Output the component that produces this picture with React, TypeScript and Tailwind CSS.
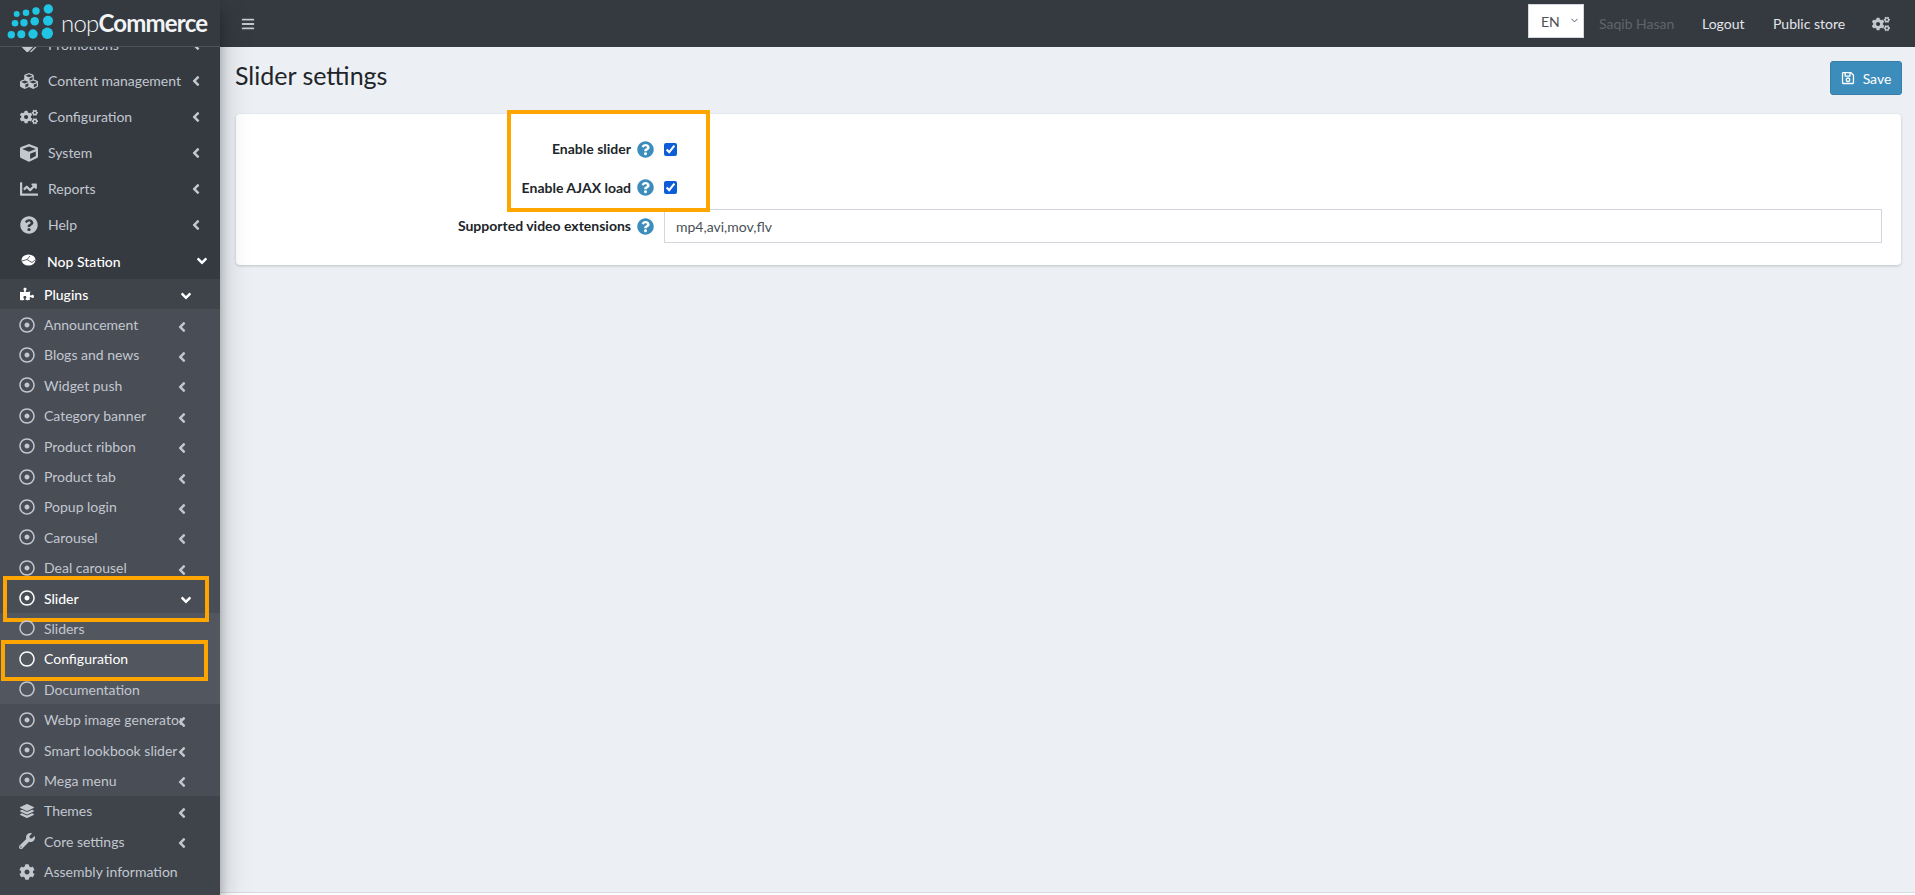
import React from "react";
import {
  FaAngleDown,
  FaAngleLeft,
  FaBars,
  FaChartLine,
  FaCog,
  FaCogs,
  FaCube,
  FaCubes,
  FaLayerGroup,
  FaPuzzlePiece,
  FaQuestionCircle,
  FaRegCircle,
  FaRegDotCircle,
  FaRegSave,
  FaTags,
  FaWrench,
} from "react-icons/fa";
import { ChevronDown } from "lucide-react";

const font = { fontFamily: 'Lato, "Noto Sans", sans-serif' };

const topItems = [
  { label: "Promotions", icon: FaTags },
  { label: "Content management", icon: FaCubes },
  { label: "Configuration", icon: FaCogs },
  { label: "System", icon: FaCube },
  { label: "Reports", icon: FaChartLine },
  { label: "Help", icon: FaQuestionCircle },
];

const pluginsBefore = [
  "Announcement",
  "Blogs and news",
  "Widget push",
  "Category banner",
  "Product ribbon",
  "Product tab",
  "Popup login",
  "Carousel",
  "Deal carousel",
];

const pluginsAfter = ["Webp image generator", "Smart lookbook slider", "Mega menu"];

const Logo = () => {
  const dots = [
    [16.7, 14, 3], [26, 12.7, 3.3], [36, 11, 3.7], [48.3, 9, 4.7],
    [15, 23.3, 3.3], [24, 22.7, 3.7], [34.7, 21.3, 4.3], [48, 20.7, 5],
    [11.3, 34.7, 3.7], [21.3, 34.3, 4], [33, 34, 4.7], [47.3, 33.3, 5.7],
  ];
  return (
    <svg width="56" height="46" viewBox="0 0 56 46" className="shrink-0">
      {dots.map(([cx, cy, r], i) => (
        <circle key={i} cx={cx} cy={cy} r={r} fill="#1fc5e2" />
      ))}
    </svg>
  );
};

const NopStationIcon = () => (
  <svg width="15" height="12" viewBox="0 0 15 12">
    <ellipse cx="7.5" cy="6" rx="7" ry="5.6" fill="#fff" />
    <path d="M1 7 L6 5.5 L9 2 M6 5.5 L11 8.5 L14 6" stroke="#353a41" strokeWidth="0.8" fill="none" />
  </svg>
);

const TopRow = ({ label, icon: Icon }: { label: string; icon: React.ComponentType<{ size?: number }> }) => (
  <div className="flex h-9 items-center text-[#c2c7d0] text-[14px]">
    <span className="flex w-[48px] justify-center pl-[10px]">
      <Icon size={18} />
    </span>
    <span className="-mt-[1px] w-[140px] whitespace-nowrap">{label}</span>
    <FaAngleLeft size={16} />
  </div>
);

const SubRow = ({ label, active, icon }: { label: string; active?: boolean; icon?: React.ReactNode }) => (
  <div className={`flex h-[30.4px] items-center text-[14px] ${active ? "text-white" : "text-[#c2c7d0]"}`}>
    <span className="flex w-[44px] justify-center pl-[10px]">
      {icon ?? <FaRegDotCircle size={16} />}
    </span>
    <span className="w-[130px] whitespace-nowrap">{label}</span>
    <FaAngleLeft size={16} className="mt-1 text-[#c2c7d0]" />
  </div>
);

const LeafRow = ({ label, active }: { label: string; active?: boolean }) => (
  <div className={`relative flex h-[30.4px] items-center text-[14px] ${active ? "text-white" : "text-[#c2c7d0]"}`}>
    <span className="flex w-[44px] justify-center pl-[10px]">
      <FaRegCircle size={16} />
    </span>
    <span className="whitespace-nowrap">{label}</span>
    {active && (
      <span className="absolute -top-[4px] left-[1px] h-[41px] w-[207px] border-4 border-[#ffa500]" />
    )}
  </div>
);

const Sidebar = () => (
  <aside className="relative z-10 flex h-full w-[220px] shrink-0 flex-col bg-[#353a41] shadow-[0_14px_28px_rgba(0,0,0,0.25),0_10px_10px_rgba(0,0,0,0.22)]">
    <div className="relative z-10 flex h-[47px] shrink-0 items-center border-b border-[#4b545c] bg-[#353a41]">
      <Logo />
      <span className="ml-[5px] whitespace-nowrap text-[24px] leading-none tracking-[-0.8px] text-[#f2f4f5]">
        <span className="font-light">nop</span>
        <span className="font-bold">Commerce</span>
      </span>
    </div>
    <div className="-mt-[20px] flex-1">
      {topItems.map((item) => (
        <TopRow key={item.label} {...item} />
      ))}
      <div className="flex h-9 items-center text-[14px] font-medium text-white">
        <span className="flex w-[47px] justify-center pb-[3px] pl-[10px]">
          <NopStationIcon />
        </span>
        <span className="w-[147px] whitespace-nowrap">Nop Station</span>
        <FaAngleDown size={16} />
      </div>
      <div className="bg-[#3f444b]">
        <div className="flex h-[30.4px] items-center text-[14px] font-medium text-white">
          <span className="flex w-[44px] justify-center pl-[10px]">
            <FaPuzzlePiece size={14} />
          </span>
          <span className="w-[134px]">Plugins</span>
          <FaAngleDown size={16} className="mt-1" />
        </div>
        <div className="bg-[#494d55]">
          {pluginsBefore.map((label) => (
            <SubRow key={label} label={label} />
          ))}
          <div className="relative flex h-[30.4px] items-center text-[14px] font-medium text-white">
            <span className="flex w-[44px] justify-center pl-[10px]">
              <FaRegDotCircle size={16} />
            </span>
            <span className="w-[134px]">Slider</span>
            <FaAngleDown size={16} className="mt-1" />
            <span className="absolute -top-[7px] left-[3px] h-[46px] w-[206px] border-4 border-[#ffa500]" />
          </div>
          <div className="bg-[#52565e]">
            <LeafRow label="Sliders" />
            <LeafRow label="Configuration" active />
            <LeafRow label="Documentation" />
          </div>
          {pluginsAfter.map((label) => (
            <SubRow key={label} label={label} />
          ))}
        </div>
        <SubRow label="Themes" icon={<FaLayerGroup size={14} />} />
        <SubRow label="Core settings" icon={<FaWrench size={16} />} />
        <div className="flex h-[30.4px] items-center text-[14px] text-[#c2c7d0]">
          <span className="flex w-[44px] justify-center pl-[10px]">
            <FaCog size={16} />
          </span>
          <span className="whitespace-nowrap">Assembly information</span>
        </div>
        <div className="h-[40px]" />
      </div>
    </div>
  </aside>
);

const Header = () => (
  <header className="flex h-[47px] shrink-0 items-center bg-[#353a41] text-[14px] text-[#e3e5e8]">
    <FaBars size={14} className="ml-[21px] text-[#c2c7d0]" />
    <div className="ml-auto flex items-center pr-[25px]">
      <div className="relative -mt-[5px] h-[34px] w-[56px]">
        <select
          defaultValue="EN"
          className="h-full w-full appearance-none border border-[#d2d6de] bg-white pl-[12px] text-[14px] text-[#495057]"
        >
          <option>EN</option>
        </select>
        <ChevronDown size={11} className="pointer-events-none absolute right-[4px] top-[11px] text-[#495057]" />
      </div>
      <span className="ml-[15px] w-[75px] whitespace-nowrap text-[#5f646b]">Saqib Hasan</span>
      <span className="ml-[28px] w-[42px]">Logout</span>
      <span className="ml-[29px] w-[70px] whitespace-nowrap">Public store</span>
      <FaCogs size={18} className="ml-[29px] text-[#c2c7d0]" />
    </div>
  </header>
);

const HelpIcon = () => (
  <FaQuestionCircle size={17} className="shrink-0 text-[#3c8dbc]" />
);

const FormRow = ({ label, children }: { label: string; children: React.ReactNode }) => (
  <div className="flex h-[38.5px] items-center">
    <div className="flex w-[418px] shrink-0 items-center justify-end gap-[6px]">
      <label className="-mt-[1px] whitespace-nowrap text-[14px] font-bold text-[#212529]">{label}</label>
      <HelpIcon />
    </div>
    <div className="ml-[10px] flex flex-1 items-center pr-[19px]">{children}</div>
  </div>
);

const App = () => (
  <div style={font} className="flex h-screen w-full overflow-hidden bg-[#ecf0f5]">
    <Sidebar />
    <div className="flex min-w-0 flex-1 flex-col">
      <Header />
      <main className="flex flex-1 flex-col pl-[16px] pr-[14px]">
        <div className="flex h-[67px] shrink-0 items-center justify-between pb-[5px]">
          <h1 className="-ml-[1px] mb-[6px] text-[25px] leading-none text-[#212529]">Slider settings</h1>
          <button className="-mr-[1px] flex h-[34px] w-[72px] items-center justify-center gap-[8px] rounded-[3px] border border-[#367fa9] bg-[#3c8dbc] text-[14px] text-white">
            <FaRegSave size={14} />
            Save
          </button>
        </div>
        <section className="relative h-[151px] rounded-[4px] bg-white pt-[16px] shadow-[0_1px_3px_rgba(0,0,0,0.2)]">
          <FormRow label="Enable slider">
            <input type="checkbox" defaultChecked className="h-[13px] w-[13px] accent-[#0b5ed7]" />
          </FormRow>
          <FormRow label="Enable AJAX load">
            <input type="checkbox" defaultChecked className="h-[13px] w-[13px] accent-[#0b5ed7]" />
          </FormRow>
          <FormRow label="Supported video extensions">
            <input
              type="text"
              defaultValue="mp4,avi,mov,flv"
              className="h-[34px] w-full border border-[#d2d6de] bg-white px-[11px] text-[14px] text-[#495057]"
            />
          </FormRow>
          <span className="absolute -top-[4px] left-[271px] h-[102px] w-[203px] border-4 border-[#ffa500]" />
        </section>
      </main>
      <footer className="h-[3px] shrink-0 border-t border-[#d8dce2] bg-white" />
    </div>
  </div>
);

export default App;
